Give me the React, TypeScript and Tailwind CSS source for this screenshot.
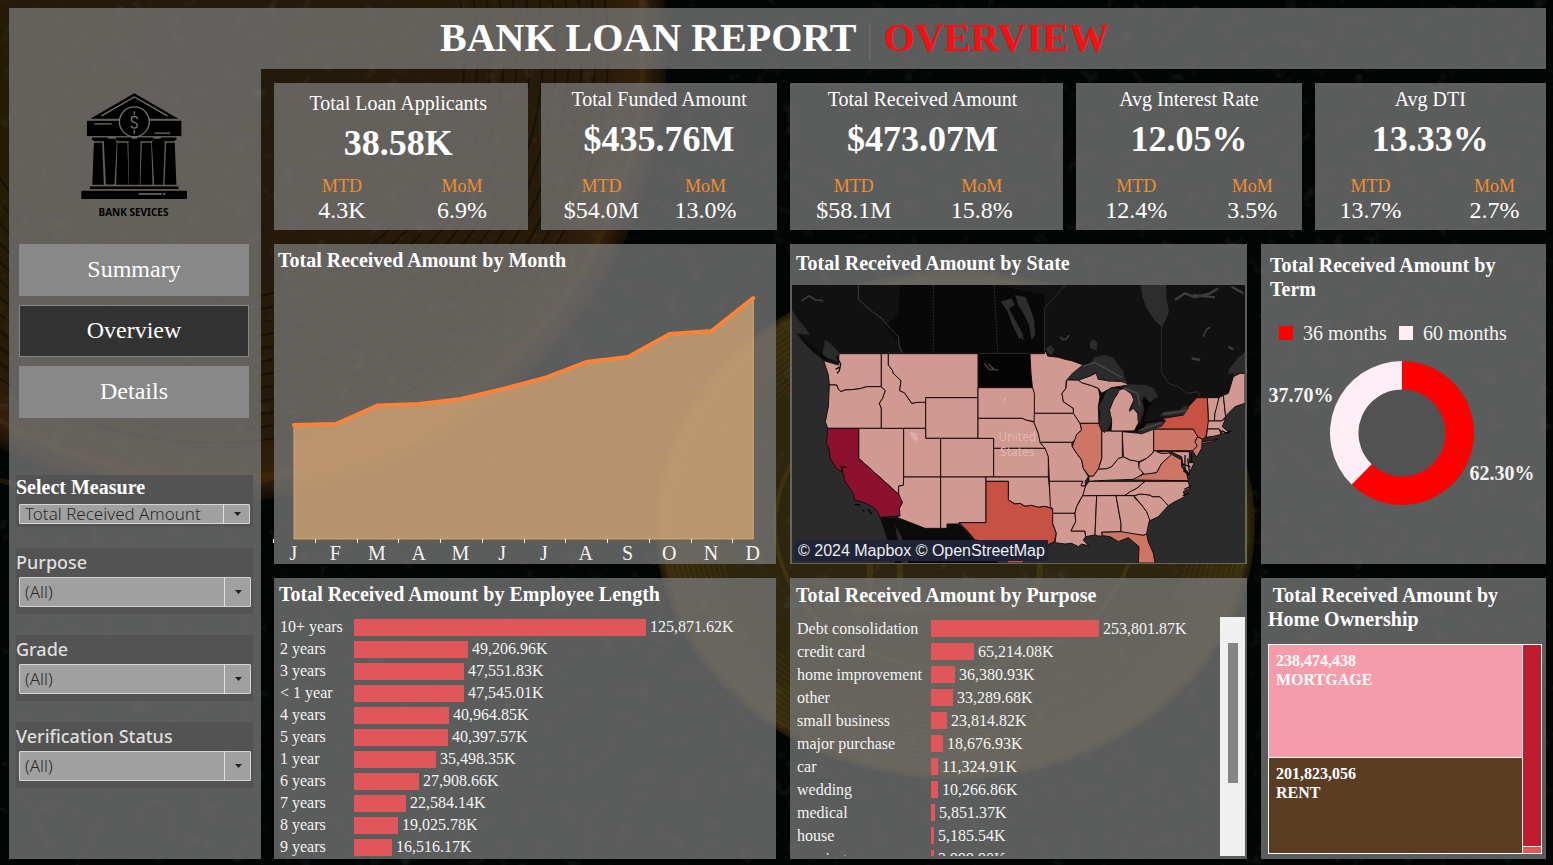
import React from "react";

const SERIF = "font-['Liberation_Serif','Times_New_Roman',serif]";
const SANS = "font-['Noto_Sans',sans-serif]";
const PANEL = "bg-[#797979]/75";

const kpis = [
  { title: "Total Loan Applicants", value: "38.58K", mtd: "4.3K", mom: "6.9%", pad: "pt-2 pr-1.5", row: "pl-7 gap-10" },
  { title: "Total Funded Amount", value: "$435.76M", mtd: "$54.0M", mom: "13.0%", pad: "pt-1", row: "pl-5 gap-6" },
  { title: "Total Received Amount", value: "$473.07M", mtd: "$58.1M", mom: "15.8%", pad: "pt-1 pr-2", row: "pl-6 gap-12" },
  { title: "Avg Interest Rate", value: "12.05%", mtd: "12.4%", mom: "3.5%", pad: "pt-1", row: "pl-5 gap-9" },
  { title: "Avg DTI", value: "13.33%", mtd: "13.7%", mom: "2.7%", pad: "pt-1", row: "pl-4 gap-11" },
];

type Row = { label: string; amount: number };

const employeeRows: Row[] = [
  { label: "10+ years", amount: 125871.62 },
  { label: "2 years", amount: 49206.96 },
  { label: "3 years", amount: 47551.83 },
  { label: "< 1 year", amount: 47545.01 },
  { label: "4 years", amount: 40964.85 },
  { label: "5 years", amount: 40397.57 },
  { label: "1 year", amount: 35498.35 },
  { label: "6 years", amount: 27908.66 },
  { label: "7 years", amount: 22584.14 },
  { label: "8 years", amount: 19025.78 },
  { label: "9 years", amount: 16516.17 },
];

const purposeRows: Row[] = [
  { label: "Debt consolidation", amount: 253801.87 },
  { label: "credit card", amount: 65214.08 },
  { label: "home improvement", amount: 36380.93 },
  { label: "other", amount: 33289.68 },
  { label: "small business", amount: 23814.82 },
  { label: "major purchase", amount: 18676.93 },
  { label: "car", amount: 11324.91 },
  { label: "wedding", amount: 10266.86 },
  { label: "medical", amount: 5851.37 },
  { label: "house", amount: 5185.54 },
  { label: "moving", amount: 3999.9 },
];

const formatK = (n: number) =>
  n.toLocaleString("en-US", { minimumFractionDigits: 2, maximumFractionDigits: 2 }) + "K";

const ringSteps = [0, 1, 2, 3, 4, 5, 6, 7, 8, 9, 10, 11];

function Backdrop() {
  return (
    <svg
      className="absolute inset-0 h-full w-full"
      viewBox="0 0 1553 865"
      preserveAspectRatio="xMidYMid slice"
      aria-hidden="true"
    >
      <defs>
        <radialGradient id="bronze">
          <stop offset="0" stopColor="#231a0a" />
          <stop offset="0.85" stopColor="#271a08" />
          <stop offset="0.95" stopColor="#33200a" />
          <stop offset="1" stopColor="#110c06" />
        </radialGradient>
        <radialGradient id="gold">
          <stop offset="0" stopColor="#2c2410" />
          <stop offset="0.8" stopColor="#2f260d" />
          <stop offset="0.97" stopColor="#382d0c" />
          <stop offset="1" stopColor="#1c1606" />
        </radialGradient>
        <filter id="dust" x="0" y="0" width="100%" height="100%">
          <feTurbulence type="fractalNoise" baseFrequency="0.06" numOctaves="4" seed="7" />
          <feColorMatrix values="0 0 0 0 0.5  0 0 0 0 0.55  0 0 0 0 0.58  2.6 0 0 0 -1.6" />
        </filter>
      </defs>
      <rect width="1553" height="865" fill="#030505" />
      <circle cx="215" cy="50" r="452" fill="url(#bronze)" />
      <g fill="none" stroke="#0c0804" strokeOpacity="0.5" strokeWidth="2">
        {ringSteps.map((i) => (
          <circle key={i} cx="215" cy="50" r={250 + i * 13} />
        ))}
      </g>
      <g fill="none" stroke="#4a3010" strokeOpacity="0.4" strokeWidth="5">
        <circle cx="215" cy="50" r="428" />
        <path d="M0 480 Q120 520 265 480 T420 440" />
      </g>
      <ellipse cx="955" cy="525" rx="300" ry="255" fill="url(#gold)" />
      <g fill="none" stroke="#5a4812" strokeOpacity="0.4" strokeWidth="1">
        {ringSteps.map((i) => (
          <ellipse key={i} cx="955" cy="525" rx={292 - i * 5} ry={247 - i * 5} />
        ))}
        <ellipse cx="955" cy="525" rx="180" ry="145" strokeWidth="4" />
        <path d="M870 440v170M900 440v170M850 440h130q50 0 50 42t-50 42H870M980 524q60 0 60 44t-60 42H850" strokeWidth="6" />
      </g>
      <rect width="1553" height="865" filter="url(#dust)" opacity="0.12" />
    </svg>
  );
}

function BankLogo() {
  return (
    <svg className="w-[106px]" viewBox="240 278 320 322" aria-hidden="true">
      <g fill="#000">
        <path d="M401 279 L534 356 H268 Z" />
        <rect x="258" y="362" width="285" height="46" />
        <path d="M273 412h48v7l-8 5h-32l-8-5zM345 412h48v7l-8 5h-32l-8-5zM410 412h48v7l-8 5h-32l-8-5zM480 412h48v7l-8 5h-32l-8-5z" />
        <path d="M279 428h25l5 127h-35zM350 428h30l4 127h-38zM424 428h28l4 127h-37zM497 428h26l5 127h-36z" />
        <path d="M313 416h30l5 10-7 128h-26l-6-128zM387 416h28l5 12-3 127h-32l-2-127zM458 416h26l9 12-5 127h-27l-7-127z" />
        <rect x="267" y="560" width="267" height="8" />
        <rect x="241" y="573" width="319" height="25" rx="3" />
      </g>
      <path d="M302 347 L401 290 L501 347" fill="none" stroke="#77736d" strokeWidth="4" />
      <circle cx="401" cy="365" r="45" fill="#000" stroke="#77736d" strokeWidth="4" />
      <g fill="none" stroke="#77736d" strokeWidth="4">
        <path d="M280 371h53M462 399h47M414 583h70M487 583h8" />
        <path d="M401 333v11M401 390v11M410 357q0-8-9-8t-9 8q0 7 9 10t9 9q0 8-9 8t-9-8" />
      </g>
    </svg>
  );
}

function NavButton({ label, active }: { label: string; active?: boolean }) {
  return (
    <button
      type="button"
      className={
        active
          ? "h-13 border border-[#868686] bg-[#333333] pb-0.5 text-2xl text-white"
          : "h-13 bg-[#888888] pb-0.5 text-2xl text-white"
      }
    >
      {label}
    </button>
  );
}

function Filter({ id, label, value, compact }: { id: string; label: string; value: string; compact?: boolean }) {
  return (
    <div className={compact ? "h-13 bg-[#535353] pr-[3px]" : "h-[66px] bg-[#535353] pr-[2px]"}>
      <label
        htmlFor={id}
        className={
          compact
            ? "block h-[29px] text-xl leading-6 font-bold text-white"
            : `block h-[29px] text-[18px] leading-7 font-medium text-[#dedede] ${SANS}`
        }
      >
        {label}
      </label>
      <div className="relative ml-[3px]">
        <select
          id={id}
          defaultValue={value}
          className={`block w-full appearance-none rounded-[1px] border border-[#d4d4d4] bg-[#a0a0a0] pl-[5px] text-[17px] font-light text-[#2a2a2a] ${SANS} ${
            compact ? "h-5 leading-[18px]" : "h-[30px] leading-7"
          }`}
        >
          <option>{value}</option>
        </select>
        <span className="pointer-events-none absolute inset-y-0 right-0 flex w-[27px] items-center justify-center border-l border-[#e0e0e0]">
          <svg className="w-[7px]" viewBox="0 0 7 4" aria-hidden="true">
            <path d="M0 0h7L3.500 4z" fill="#222" />
          </svg>
        </span>
      </div>
    </div>
  );
}

function Bars({ rows, scale, labelClass, rowClass }: { rows: Row[]; scale: number; labelClass: string; rowClass: string }) {
  return (
    <ul className="text-base text-[#f4f4f4]">
      {rows.map((r) => (
        <li key={r.label} className={`flex items-center whitespace-nowrap ${rowClass}`}>
          <span className={labelClass}>{r.label}</span>
          <span
            className="mr-1 h-[17px] shrink-0 bg-[#e15759]"
            style={{ width: Math.max(3, Math.round(r.amount * scale)) }}
          />
          <span>{formatK(r.amount)}</span>
        </li>
      ))}
    </ul>
  );
}

const months = ["J", "F", "M", "A", "M", "J", "J", "A", "S", "O", "N", "D"];
const monthHeights = [114, 115, 133.5, 135, 140, 150, 161, 177, 182, 205, 208, 241];

function MonthChart() {
  const base = 267;
  const x = (i: number) => 20 + i * 41.75;
  const line = monthHeights.map((h, i) => `${x(i)},${base - h}`).join(" ");
  return (
    <svg className="block w-full overflow-visible" viewBox="0 0 502 290" role="img" aria-label="Total received amount by month">
      <polygon points={`${x(0)},${base} ${line} ${x(11)},${base}`} fill="#f2b778" fillOpacity="0.6" stroke="#dfa468" strokeWidth="1" />
      <polyline points={line} fill="none" stroke="#ff8238" strokeWidth="4" strokeLinecap="round" strokeLinejoin="round" />
      {months.map((m, i) => (
        <g key={i}>
          <rect x={Math.round(x(i) - 21)} y={base} width="1" height="4" fill="#fff" />
          <text x={x(i) - 0.5} y={base + 21} textAnchor="middle" fontSize="20" fill="#f4f4f4">
            {m}
          </text>
        </g>
      ))}
    </svg>
  );
}

const westStates = [
  "M116 362L160 375 162 341 289 341 289 440 245 440 225 446 200 449 180 450 168 455 160 448 155 435 133 435 130 405Z",
  "M133 435L155 435 160 448 168 455 180 450 200 449 225 446 245 440 289 440 301 452 293 475 283 490 289 505 289 565 128 565 121 545 130 500Z",
  "M221 565L356 565 356 710 355 736 341 738 341 763 221 655Z",
  "M289 341L310 341 310 375 322 390 325 400 348 422 344 452 358 458 380 490 422 483 422 565 289 565 289 505 283 490 293 475 301 452 289 440Z",
  "M310 341L579 341 579 473 422 473 422 487 395 487 380 490 370 475 358 458 344 452 348 422 325 400 322 390 310 375Z",
  "M422 473H579V595H422Z",
  "M356 565H422V595H467V711H356Z",
  "M467 595H626V711H467Z",
  "M356 711H467V865H420L338 833 343 805 352 787 341 763 341 738 355 736Z",
  "M467 711H603V848H522V852H486V865H467Z",
  "M579 443H745L750 460 750 520 748 545 722 540 712 535H579Z",
  "M579 535H712L722 540 747 546 760 580 768 612 785 625H626V595H579Z",
  "M626 625H785L790 650V711H626Z",
  "M603 711H790L795 760 803 806 780 799 760 802 740 796 720 799 705 790 690 792 670 780V724H603Z",
];

const eastStates = [
  "M45 341L88 341 92 332 98 348 130 352 150 358 170 362 205 375 160 415 153 425 153 445 141 460 145 485 175 505 176 520 58 520 58 460 52 440 48 400Z",
  "M58 520L176 520 195 550 200 570 185 583 182 600 170 607 75 607 70 580 57 548Z",
  "M75 607L170 607 172 620 185 640 200 660 205 685 220 710 210 725 213 738 198 738 203 724 103 724 100 650 90 625Z",
  "M103 724L203 724 198 738 212 738 205 765 195 780 185 800 180 820 113 820 113 806 106 800Z",
  "M113 820L180 820 182 845 168 873 210 873 212 890 205 900 222 918 200 912 190 920 170 910 150 912 120 908 124 880 113 850Z",
  "M203 767L245 767 240 885 212 890 210 873 168 873 182 845 180 820 185 800Z",
  "M245 767L303 767 318 850 318 875 260 877 262 888 250 888 240 885Z",
  "M303 767L357 767 360 775 380 795 395 815 405 835 398 865 395 882 385 886 318 880 318 850Z",
  "M357 767L375 762 405 765 412 770 435 770 460 797 430 830 405 842 395 815 380 795Z",
  "M390 724L520 724 525 745 505 755 510 770 480 785 460 797 435 770 412 770 405 765 375 762 357 767 330 766 345 755 365 745Z",
  "M212 738L222 724 248 724 390 724 365 745 345 755 330 766 203 767Z",
  "M222 708L235 708 250 687 275 686 290 680 310 655 325 650 345 660 370 663 372 680 385 700 360 718 248 722 222 724Z",
  "M416 632L425 632 440 640 460 637 470 645 440 670 425 698 390 705 372 685 372 668 395 655 412 640Z",
  "M322 575L345 577 375 580 416 567 416 632 412 640 395 655 372 665 345 660 325 650Z",
  "M260 573L322 573 322 652 310 655 290 680 275 686 250 687 260 655Z",
  "M155 420L190 420 200 428 230 437 250 445 255 470 250 500 252 550 195 550 175 520 175 505 145 485 141 460 153 445Z",
  "M190 420L225 408 245 398 250 418 280 422 330 425 340 435 310 440 290 443 260 460 250 445 230 437 200 428Z",
  "M310 450L330 445 350 462 357 480 343 510 355 505 368 520 372 545 358 573 288 573 290 545 283 510 295 480Z",
  "M425 635L523 635 523 668 538 668 522 700 505 680 500 650 470 637 455 640 440 640Z",
  "M577 473L612 473 608 500 600 520 598 543 580 543Z",
  "M612 473L625 466 632 530 620 543 598 543 600 520Z",
  "M625 466L640 460 655 410 675 400 690 400 690 490 660 500 640 520 632 530Z",
  "M577 543L620 543 632 535 622 560 640 575 625 582 613 567 577 567Z",
  "M577 567L613 567 618 583 600 588 574 592Z",
];

const PINK = "#d09a92";

function StateMap() {
  return (
    <svg className="block w-full" viewBox="21 135 1359 834" role="img" aria-label="Total received amount by state">
      <rect x="21" y="135" width="1359" height="834" fill="#2b2b2b" />
      <path d="M21 135H1380V330L1350 390 1330 470 1250 480 1120 560 780 500 130 400 115 362 60 300 35 280 75 285 60 262 40 240 21 210Z" fill="#111111" />
      <path d="M120 300L135 310 165 340 160 365 130 355 112 345Z" fill="#2b2b2b" />
      <path d="M35 278Q90 320 135 362L112 358Q60 320 35 278Z" fill="#0a0a0a" />
      <path d="M345 135H640L778 165V341H352L345 310 300 260 340 220Z" fill="#080808" />
      <path d="M579 341H735L745 443H579Z" fill="#040404" />
      <path d="M285 832L338 833 420 865H486V852H522L570 900 640 969H370L350 890 330 855 350 969H330Z" fill="#0b0b0b" />
      <g fill="none" stroke="#3d3d3d" strokeWidth="2">
        <path d="M220 135V178L262 215 290 235 315 265 340 290 343 320 352 338" strokeWidth="3" />
        <path d="M445 135V341M628 135L638 341" strokeDasharray="6 3" />
        <path d="M842 135L778 205V341" />
        <path d="M1129 262V395L1150 430 1180 440 1205 460 1240 455 1245 472" />
        <path d="M50 182L72 168 92 180 115 182M598 370L612 388 640 390M610 372L630 390M1255 290Q1262 265 1275 262M825 290Q840 310 852 285" strokeWidth="5" />
        <path d="M1170 180L1200 160 1230 172 1275 160 1300 145M1225 165L1290 172M1340 140L1375 160M1330 320L1345 328M1220 355L1245 360" strokeWidth="7" />
        <path d="M160 340H780" />
      </g>
      <g fill="#2d2d2d">
        <path d="M648 185L680 175 690 195 672 205 690 240 705 265 704 300 680 250 668 215Z" />
        <path d="M690 165L722 172 735 205 748 240 750 285 740 300 732 255 718 225 700 195Z" />
        <path d="M694 250L712 280 716 300 700 292Z" />
        <path d="M1067 135H1143L1145 180 1152 215 1142 240 1130 262 1108 240 1085 205 1072 170Z" />
        <path d="M915 305L925 298 938 310 935 332 915 325Z" />
        <path d="M783 325L798 316 808 330 800 345 788 340Z" />
        <path d="M1380 340L1360 352 1335 385 1328 402 1345 400 1380 365Z" />
      </g>
      <g stroke="#160d0c" strokeWidth="3" strokeLinejoin="round" fill={PINK}>
        {westStates.map((d) => (
          <path key={d} d={d} />
        ))}
        <path
          d="M128 565H221V655L341 763 352 787 343 805 345 828 285 832 278 815 262 800 235 787 208 780 205 760 180 725 175 700 155 685 135 655 133 630 124 610Z"
          fill="#8e1030"
        />
        <path
          d="M603 724H670V780L690 792 705 790 720 799 740 796 760 802 780 799 803 806V850L814 880 808 905 780 918 740 940 712 969H670L640 940 620 905 570 900 545 870 522 848H603Z"
          fill="#c75142"
        />
        <path d="M155 350L167 372 163 392 156 400M152 388L162 382M166 680L185 682M170 682L172 697M210 793L225 795M232 810L238 814M248 808L260 822" fill="none" stroke="#000" strokeWidth="4" />
      </g>
      <g transform="translate(690 0)" stroke="#160d0c" strokeWidth="3" strokeLinejoin="round" fill={PINK}>
        <path d="M205 375L240 365 330 410 345 435 380 432 430 470 400 500 385 545 445 540 430 575 360 580 300 580 245 580 250 440 160 420Z" fill="#050505" stroke="none" />
        {eastStates.map((d) => (
          <path key={d} d={d} />
        ))}
        <g fill="#cd7666">
          <path d="M195 550L252 550 260 573 260 655 250 687 235 708 222 708 205 685 200 660 185 640 172 620 185 583 200 570Z" />
          <path d="M416 567L535 567 548 590 540 605 547 618 535 632 416 632Z" />
          <path d="M350 720L385 703 425 698 440 670 470 643 482 650 500 660 500 680 515 700 520 722Z" />
          <path d="M548 590L562 597 560 625 545 652 533 632 547 618 540 605Z" />
          <path d="M260 877L318 875 385 886 395 882 400 905 415 940 420 969H370L372 920 340 893 310 905 285 890 262 887Z" />
        </g>
        <path d="M432 555L450 545 445 535 505 525 520 500 545 473 577 473 580 543 577 567 572 592 562 597 548 590 535 567 416 567Z" fill="#c75142" />
        <path d="M560 606L610 597 590 605 565 611Z" fill="#c75142" />
        <g fill="#2b2b2b" stroke="#151515" strokeWidth="2">
          <path d="M158 418L172 400 200 378 225 370 240 350 270 345 295 352 310 375 325 392 330 415 340 432 310 422 280 424 268 418 250 418 242 398 225 408 190 420Z" />
          <path d="M252 558L255 520 250 500 262 480 272 455 290 443 315 445 308 462 295 480 283 510 290 540 282 565 268 578Z" />
          <path d="M320 442L345 432 395 435 418 445 430 470 405 488 388 470 382 480 388 510 375 550 368 540 370 520 355 505 343 515 357 480 350 462Z" />
          <path d="M355 573L375 575 395 550 452 542 440 558 410 570 380 582Z" />
          <path d="M432 528L445 515 495 508 512 495 520 505 505 525 450 530Z" />
        </g>
        <path d="M205 378L240 368 320 412M330 445L368 460 375 500M370 572L440 548M445 522L515 512" fill="none" stroke="#4a4a4a" strokeWidth="4" />
        <path d="M510 645V695M518 655L523 695M500 672L526 680M505 692L524 705M508 748L528 738M503 768L520 760M620 572L636 580 648 572M530 640V668" fill="none" stroke="#0a0606" strokeWidth="4" />
      </g>
      <path d="M372 575L395 580 400 605 385 598ZM655 475L662 470 660 490Z" fill="#dcb0aa" />
      <g fill="#e4b5af" fontFamily="'Noto Sans', sans-serif" fontSize="36" textAnchor="middle">
        <text x="697" y="603">United</text>
        <text x="697" y="647">States</text>
      </g>
    </svg>
  );
}

function Donut() {
  const share = 0.623;
  const a = share * 2 * Math.PI;
  const p = (r: number) => `${72 + r * Math.sin(a)} ${72 - r * Math.cos(a)}`;
  return (
    <svg className="w-36" viewBox="0 0 144 144" role="img" aria-label="Share by term">
      <circle cx="72" cy="72" r="44" fill="#525252" />
      <path d={`M72 0A72 72 0 1 1 ${p(72)}L${p(43.5)}A43.500 43.500 0 1 0 72 28.500Z`} fill="#ff0000" />
      <path d={`M72 0A72 72 0 0 0 ${p(72)}L${p(43.5)}A43.500 43.500 0 0 1 72 28.500Z`} fill="#ffeef5" />
    </svg>
  );
}

function PanelTitle({ children, className }: { children: React.ReactNode; className: string }) {
  return <h2 className={`text-xl leading-6 font-bold text-white ${className}`}>{children}</h2>;
}

export default function App() {
  return (
    <div className={`relative min-h-screen bg-[#030505] ${SERIF}`}>
      <Backdrop />
      <div className="relative flex min-h-screen flex-col pt-2 pr-[7px] pb-1.5 pl-[9px]">
        <header className={`flex h-[61px] items-center justify-center pr-1.5 pb-0.5 ${PANEL}`}>
          <h1 className="text-[40px] leading-[58px] font-bold whitespace-nowrap text-white">
            BANK LOAN REPORT <span className="font-normal text-[#6a6a6a]">|</span>{" "}
            <span className="text-[#fb0d10]">OVERVIEW</span>
          </h1>
        </header>

        <div className="flex grow gap-[13px]">
          <aside className={`flex w-[252px] shrink-0 flex-col ${PANEL}`}>
            <div className="flex flex-col items-center pt-6 pr-[3px]">
              <BankLogo />
              <p className={`mt-1 text-[10px] leading-4 font-bold text-black ${SANS}`}>BANK SEVICES</p>
            </div>
            <nav className="mt-6 flex flex-col gap-[9px] pr-3 pl-2.5">
              <NavButton label="Summary" />
              <NavButton label="Overview" active />
              <NavButton label="Details" />
            </nav>
            <div className="mt-[57px] mr-2 ml-[7px] flex flex-col gap-[21px]">
              <Filter id="measure" label="Select Measure" value="Total Received Amount" compact />
              <Filter id="purpose" label="Purpose" value="(All)" />
              <Filter id="grade" label="Grade" value="(All)" />
              <Filter id="verification" label="Verification Status" value="(All)" />
            </div>
          </aside>

          <main className="flex min-w-0 grow flex-col gap-3.5 pt-3.5">
            <section className="grid h-[147px] grid-cols-[254fr_235fr_273fr_225fr_231fr] gap-[13px]">
              {kpis.map((k) => (
                <article key={k.title} className={`flex min-w-0 flex-col pb-2 text-white ${k.pad} ${PANEL}`}>
                  <h2 className="text-center text-xl leading-6">{k.title}</h2>
                  <p className="mt-2 text-center text-4xl leading-10 font-bold">{k.value}</p>
                  <dl className={`mt-auto flex ${k.row}`}>
                    <div className="w-20 text-center">
                      <dt className="text-lg leading-6 text-[#f28e2b]">MTD</dt>
                      <dd className="text-2xl leading-6">{k.mtd}</dd>
                    </div>
                    <div className="w-20 text-center">
                      <dt className="text-lg leading-6 text-[#f28e2b]">MoM</dt>
                      <dd className="text-2xl leading-6">{k.mom}</dd>
                    </div>
                  </dl>
                </article>
              ))}
            </section>

            <section className="grid min-h-80 grid-cols-[502fr_457fr_285fr] gap-3.5">
              <article className={`min-w-0 ${PANEL}`}>
                <PanelTitle className="pt-1 pl-1">Total Received Amount by Month</PanelTitle>
                <MonthChart />
              </article>

              <article className={`min-w-0 px-[2px] ${PANEL}`}>
                <PanelTitle className="h-[41px] pt-[7px] pl-1">Total Received Amount by State</PanelTitle>
                <div className="relative">
                  <StateMap />
                  <p className="absolute bottom-[2px] left-[3px] bg-[#1f2438] px-[3px] font-['Liberation_Sans',Arial,sans-serif] text-base leading-[21px] whitespace-nowrap text-[#eeeeee]">
                    © 2024 Mapbox © OpenStreetMap
                  </p>
                </div>
              </article>

              <article className={`min-w-0 text-xl text-[#f4f4f4] ${PANEL}`}>
                <PanelTitle className="pt-[9px] pl-[9px]">
                  Total Received Amount by
                  <br />
                  Term
                </PanelTitle>
                <ul className="mt-5 flex gap-3 pl-[18px] leading-6">
                  <li className="flex items-center gap-2.5">
                    <span className="size-3.5 bg-[#ff0000]" />
                    36 months
                  </li>
                  <li className="flex items-center gap-2.5">
                    <span className="size-3.5 bg-[#ffeef5]" />
                    60 months
                  </li>
                </ul>
                <div className="mt-4 flex justify-center pr-1 font-bold">
                  <span className="-mr-1 pt-[22px] leading-6">37.70%</span>
                  <Donut />
                  <span className="-ml-1 self-end pb-5 leading-6">62.30%</span>
                </div>
              </article>
            </section>

            <section className="grid min-h-[281px] grow grid-cols-[502fr_457fr_285fr] gap-3.5">
              <article className={`min-w-0 pl-[5px] ${PANEL}`}>
                <PanelTitle className="h-[38px] pt-1">Total Received Amount by Employee Length</PanelTitle>
                <Bars rows={employeeRows} scale={292 / 125871.62} labelClass="w-[75px] shrink-0 pl-px" rowClass="h-[22px]" />
              </article>

              <article className={`flex min-w-0 flex-col pr-[2px] pb-[3px] pl-1.5 ${PANEL}`}>
                <PanelTitle className="h-[39px] pt-[5px]">Total Received Amount by Purpose</PanelTitle>
                <div className="flex h-[239px]">
                  <div className="min-w-0 grow overflow-hidden">
                    <Bars rows={purposeRows} scale={168 / 253801.87} labelClass="w-[135px] shrink-0 pl-px" rowClass="h-[23px]" />
                  </div>
                  <div className="w-[25px] bg-[#f0f0f0] pt-[26px] pl-2">
                    <div className="h-[140px] w-2.5 bg-[#858585]" />
                  </div>
                </div>
              </article>

              <article className={`flex min-w-0 flex-col pr-1 pb-[5px] pl-[7px] ${PANEL}`}>
                <PanelTitle className="h-[66px] pt-[5px]">
                  <span className="whitespace-pre"> Total Received Amount by</span>
                  <br />
                  Home Ownership
                </PanelTitle>
                <div className="grid grow grid-cols-[253fr_18fr] gap-px bg-white p-px text-base leading-[19px] font-bold text-white">
                  <div className="grid grid-rows-[112fr_95fr] gap-px">
                    <div className="bg-[#f59ba9] pt-1.5 pl-[7px]">
                      238,474,438
                      <br />
                      MORTGAGE
                    </div>
                    <div className="bg-[#5b3d23] pt-1.5 pl-[7px]">
                      201,823,056
                      <br />
                      RENT
                    </div>
                  </div>
                  <div className="grid grid-rows-[201fr_6fr] gap-px">
                    <div className="bg-[#bf1c30]" />
                    <div className="bg-[#e15759]" />
                  </div>
                </div>
              </article>
            </section>
          </main>
        </div>
      </div>
    </div>
  );
}
